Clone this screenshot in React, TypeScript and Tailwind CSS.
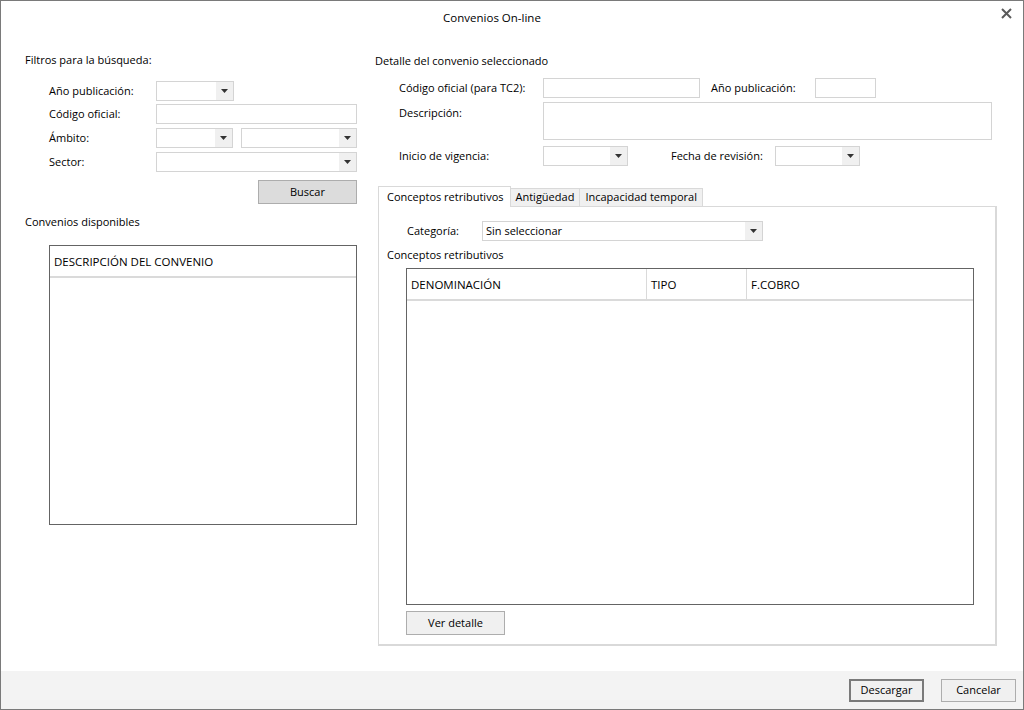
import React from 'react';

const Arrow: React.FC = () => (
  <div className="w-[17px] h-full bg-[#f0f0f0] flex items-center justify-center">
    <svg width="7" height="4" viewBox="0 0 7 4">
      <path d="M0 0h7L3.5 4z" fill="#333" />
    </svg>
  </div>
);

const Select: React.FC<{ w: string; text?: string }> = ({ w, text }) => (
  <div className={`${w} h-[20px] border border-[#d4d4d4] bg-white flex items-stretch`}>
    <div className="flex-1 flex items-center pl-[3px] text-black">{text}</div>
    <Arrow />
  </div>
);

const Input: React.FC<{ w: string; h?: string }> = ({ w, h = 'h-[20px]' }) => (
  <div className={`${w} ${h} border border-[#d4d4d4] bg-white`} />
);

export default function App() {
  return (
    <div
      className="w-[1024px] h-[710px] border border-[#7a7a7a] bg-white flex flex-col text-[11px] text-black overflow-hidden"
      style={{ fontFamily: '"Open Sans", "Noto Sans", sans-serif' }}
    >
      {/* Title bar */}
      <div className="h-[33px] relative flex items-center justify-center pr-[40px]">
        <span className="text-[11.5px] text-black">Convenios On-line</span>
        <svg className="absolute right-[11px] top-[7px]" width="11" height="11" viewBox="0 0 11 11">
          <path d="M1 1l9 9M10 1l-9 9" stroke="#5a5a5a" strokeWidth="2" />
        </svg>
      </div>

      {/* Body */}
      <div className="flex-1 flex pl-[24px]">
        {/* Left column */}
        <div className="w-[332px] flex flex-col">
          <div className="mt-[18px] h-[16px] leading-[16px]">Filtros para la búsqueda:</div>
          <div className="mt-[13px] pl-[24px] flex flex-col">
            <div className="flex items-center h-[20px]">
              <span className="w-[107px]">Año publicación:</span>
              <Select w="w-[78px]" />
            </div>
            <div className="flex items-center h-[20px] mt-[3px]">
              <span className="w-[107px]">Código oficial:</span>
              <Input w="w-[201px]" />
            </div>
            <div className="flex items-center h-[20px] mt-[4px]">
              <span className="w-[107px]">Ámbito:</span>
              <Select w="w-[77px]" />
              <div className="ml-[8px]">
                <Select w="w-[116px]" />
              </div>
            </div>
            <div className="flex items-center h-[20px] mt-[4px]">
              <span className="w-[107px]">Sector:</span>
              <Select w="w-[201px]" />
            </div>
            <div className="flex justify-end mt-[8px]">
              <button className="w-[99px] h-[24px] bg-[#dcdcdc] border border-[#adadad]">Buscar</button>
            </div>
          </div>
          <div className="mt-[10px] h-[16px] leading-[16px]">Convenios disponibles</div>
          <div className="mt-[15px] ml-[24px] w-[308px] h-[280px] border border-[#646464] flex flex-col">
            <div className="h-[32px] border-b-2 border-[#dadada] flex items-center pl-[4px] text-[11.5px] pt-[1px]">
              DESCRIPCIÓN DEL CONVENIO
            </div>
          </div>
        </div>

        {/* Right column */}
        <div className="ml-[18px] w-[622px] flex flex-col">
          <div className="mt-[19px] h-[16px] leading-[16px]">Detalle del convenio seleccionado</div>
          <div className="pl-[24px] flex flex-col">
            <div className="flex items-center h-[20px] mt-[9px]">
              <span className="w-[144px] pt-[1px]">Código oficial (para TC2):</span>
              <Input w="w-[157px]" />
              <span className="ml-[11px] w-[104px] pt-[1px]">Año publicación:</span>
              <Input w="w-[61px]" />
            </div>
            <div className="flex mt-[4px]">
              <span className="w-[144px] pt-[3px]">Descripción:</span>
              <Input w="w-[449px]" h="h-[38px]" />
            </div>
            <div className="flex items-center h-[20px] mt-[6px]">
              <span className="w-[144px] pt-[1px]">Inicio de vigencia:</span>
              <Select w="w-[85px]" />
              <span className="ml-[43px] w-[104px] pt-[1px]">Fecha de revisión:</span>
              <Select w="w-[85px]" />
            </div>
          </div>

          {/* Tabs */}
          <div className="mt-[20px] ml-[3px] flex items-end h-[21px] relative z-10">
            <div className="h-[21px] pl-[8px] pr-[6px] flex items-center bg-white border border-b-0 border-[#d9d9d9]">
              Conceptos retributivos
            </div>
            <div className="h-[19px] px-[5px] flex items-center bg-[#f0f0f0] border border-l-0 border-[#d9d9d9]">
              Antigüedad
            </div>
            <div className="h-[19px] px-[5px] flex items-center bg-[#f0f0f0] border border-l-0 border-[#d9d9d9]">
              Incapacidad temporal
            </div>
          </div>
          <div className="ml-[3px] -mt-px w-[619px] h-[440px] border border-[#d9d9d9] border-r-2 border-b-2 flex flex-col pl-[8px]">
            <div className="flex items-center h-[20px] mt-[14px] pl-[20px]">
              <span className="w-[75px]">Categoría:</span>
              <Select w="w-[281px]" text="Sin seleccionar" />
            </div>
            <div className="mt-[6px] h-[16px] leading-[16px]">Conceptos retributivos</div>
            <div className="mt-[5px] ml-[19px] w-[568px] h-[337px] border border-[#646464] flex flex-col">
              <div className="h-[32px] border-b-2 border-[#dadada] flex text-[11.5px]">
                <div className="w-[240px] border-r border-[#dadada] flex items-center pl-[4px] pt-[1px]">DENOMINACIÓN</div>
                <div className="w-[100px] border-r border-[#dadada] flex items-center pl-[4px] pt-[1px]">TIPO</div>
                <div className="flex-1 flex items-center pl-[4px] pt-[1px]">F.COBRO</div>
              </div>
            </div>
            <div className="mt-[6px] ml-[19px]">
              <button className="w-[99px] h-[24px] bg-[#f0f0f0] border border-[#adadad]">Ver detalle</button>
            </div>
          </div>
        </div>
      </div>

      {/* Footer */}
      <div className="h-[38px] bg-[#f3f3f3] flex items-center justify-end pr-[7px] gap-[17px]">
        <button className="w-[75px] h-[23px] bg-[#f0f0f0] border-2 border-[#7a7a7a]">Descargar</button>
        <button className="w-[75px] h-[23px] bg-[#f0f0f0] border border-[#adadad]">Cancelar</button>
      </div>
    </div>
  );
}
